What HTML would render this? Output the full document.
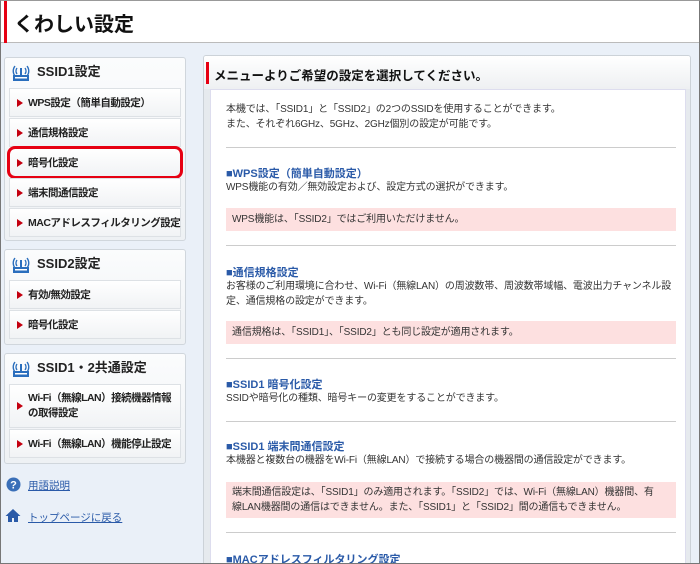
<!DOCTYPE html><html><head><meta charset="utf-8"><style>
*{margin:0;padding:0;box-sizing:border-box}
html{width:700px;height:564px;overflow:hidden}
body{width:700px;height:564px;overflow:hidden;background:#eaf0f8;font-family:"Liberation Sans","Noto Sans CJK JP",sans-serif;position:relative;color:#333}
.frame{position:absolute;left:0;top:0;width:700px;height:564px;border:1px solid #777;border-top:1px solid #999;pointer-events:none;z-index:9}
.hdr{position:absolute;left:1px;top:1px;width:698px;height:42px;background:#fff;border-bottom:1px solid #bbb}
.hdr:before{content:"";position:absolute;left:3px;top:0;width:3px;height:42px;background:#e60012}
.hdr span{position:absolute;left:13px;top:7px;font-size:20px;font-weight:bold;color:#111}
.box{position:absolute;left:4px;width:182px;background:linear-gradient(#fbfcfd,#eef1f4);border:1px solid #d0d6dc;border-radius:3px}
.box .t{height:30px;line-height:28px;padding-left:32px;font-size:13px;font-weight:bold;color:#222;position:relative}
.ico{position:absolute;left:6px;top:7px}
.it{margin:0 4px 1px 4px;background:linear-gradient(#fff,#f1f3f5);border:1px solid #dde1e5;height:29px;font-size:10.5px;letter-spacing:-0.5px;white-space:nowrap;font-weight:bold;color:#222;padding-left:18px;display:flex;align-items:center;position:relative}
.it:before{content:"";position:absolute;left:7px;top:50%;margin-top:-4px;border-left:6px solid #c40010;border-top:4px solid transparent;border-bottom:4px solid transparent}
.sel{outline:3px solid #e60012;border-radius:6px;outline-offset:-1px}
.lnk{position:absolute;left:28px;font-size:10.5px;color:#2a5aa8;text-decoration:underline}
.rp{position:absolute;left:203px;top:55px;width:488px;height:509px;overflow:hidden;background:#e6eaee;border:1px solid #ccd2d8;border-bottom:none;border-radius:3px 3px 0 0}
.rp .t{position:absolute;left:0;top:0;width:486px;height:33px;background:linear-gradient(#fff,#eef0f2)}
.rp .t:before{content:"";position:absolute;left:2px;top:6px;width:3px;height:22px;background:#e60012}
.rp .t span{position:absolute;left:10px;top:9px;font-size:12.5px;font-weight:bold;color:#111}
.in{position:absolute;left:6px;top:33px;width:476px;height:490px;background:#fff;border:1px solid #dde}
.c{position:absolute;left:15px;font-size:10px;line-height:15px;color:#333;white-space:nowrap;letter-spacing:-0.15px}
.h{position:absolute;left:15px;font-size:11px;font-weight:bold;color:#2a5aa8}
.pk{position:absolute;left:15px;width:450px;background:#fde0e0;font-size:10px;line-height:15px;padding:4px 6px;color:#333;white-space:nowrap;letter-spacing:-0.15px}
.hr{position:absolute;left:15px;width:450px;border-top:1px solid #ccc}
</style></head><body>
<div class="hdr"><span>くわしい設定</span></div>

<svg width="0" height="0" style="position:absolute"><defs><g id="w"><rect x="2" y="10" width="16" height="6" fill="#2a6ebd"/><rect x="4" y="12" width="12" height="1.5" fill="#fff"/><rect x="9" y="3" width="2" height="8" fill="#2a6ebd"/><path d="M6 3a5 5 0 0 0 0 6M4 1a8 8 0 0 0 0 10M14 3a5 5 0 0 1 0 6M16 1a8 8 0 0 1 0 10" stroke="#2a6ebd" stroke-width="1.4" fill="none"/></g></defs></svg>

<div class="box" style="top:57px;height:184px"><div class="t"><svg class="ico" width="20" height="17"><use href="#w"/></svg>SSID1設定</div>
<div class="it">WPS設定（簡単自動設定）</div><div class="it">通信規格設定</div><div class="it sel">暗号化設定</div><div class="it">端末間通信設定</div><div class="it">MACアドレスフィルタリング設定</div></div>

<div class="box" style="top:249px;height:96px"><div class="t"><svg class="ico" width="20" height="17"><use href="#w"/></svg>SSID2設定</div>
<div class="it">有効/無効設定</div><div class="it">暗号化設定</div></div>

<div class="box" style="top:353px;height:111px"><div class="t"><svg class="ico" width="20" height="17"><use href="#w"/></svg>SSID1・2共通設定</div>
<div class="it" style="height:44px;line-height:15px">Wi-Fi（無線LAN）接続機器情報<br>の取得設定</div><div class="it">Wi-Fi（無線LAN）機能停止設定</div></div>

<svg style="position:absolute;left:6px;top:477px" width="15" height="15"><circle cx="7.5" cy="7.5" r="7" fill="#3a6fb8"/><text x="7.5" y="11.5" font-size="11" font-weight="bold" fill="#fff" text-anchor="middle" font-family="Liberation Sans">?</text></svg>
<div class="lnk" style="top:478px">用語説明</div>
<svg style="position:absolute;left:5px;top:508px" width="16" height="15"><path d="M8 1L0.5 8H3v6h4v-4h2v4h4V8h2.5z" fill="#2a5aa8"/></svg>
<div class="lnk" style="top:510px">トップページに戻る</div>

<div class="rp"><div class="t"><span>メニューよりご希望の設定を選択してください。</span></div>
<div class="in">
<div class="c" style="top:12px">本機では、「SSID1」と「SSID2」の2つのSSIDを使用することができます。<br>また、それぞれ6GHz、5GHz、2GHz個別の設定が可能です。</div>
<div class="hr" style="top:57px"></div>
<div class="h" style="top:75px">■WPS設定（簡単自動設定）</div>
<div class="c" style="top:90px">WPS機能の有効／無効設定および、設定方式の選択ができます。</div>
<div class="pk" style="top:118px;height:23px">WPS機能は、「SSID2」ではご利用いただけません。</div>
<div class="hr" style="top:155px"></div>
<div class="h" style="top:174px">■通信規格設定</div>
<div class="c" style="top:189px">お客様のご利用環境に合わせ、Wi-Fi（無線LAN）の周波数帯、周波数帯域幅、電波出力チャンネル設<br>定、通信規格の設定ができます。</div>
<div class="pk" style="top:231px;height:23px">通信規格は、「SSID1」、「SSID2」とも同じ設定が適用されます。</div>
<div class="hr" style="top:268px"></div>
<div class="h" style="top:286px">■SSID1 暗号化設定</div>
<div class="c" style="top:301px">SSIDや暗号化の種類、暗号キーの変更をすることができます。</div>
<div class="hr" style="top:331px"></div>
<div class="h" style="top:348px">■SSID1 端末間通信設定</div>
<div class="c" style="top:363px">本機器と複数台の機器をWi-Fi（無線LAN）で接続する場合の機器間の通信設定ができます。</div>
<div class="pk" style="top:392px;height:36px;padding-top:3px">端末間通信設定は、「SSID1」のみ適用されます。「SSID2」では、Wi-Fi（無線LAN）機器間、有<br>線LAN機器間の通信はできません。また、「SSID1」と「SSID2」間の通信もできません。</div>
<div class="hr" style="top:442px"></div>
<div class="h" style="top:461px">■MACアドレスフィルタリング設定</div>
</div></div>
<div class="frame"></div>
</body></html>
